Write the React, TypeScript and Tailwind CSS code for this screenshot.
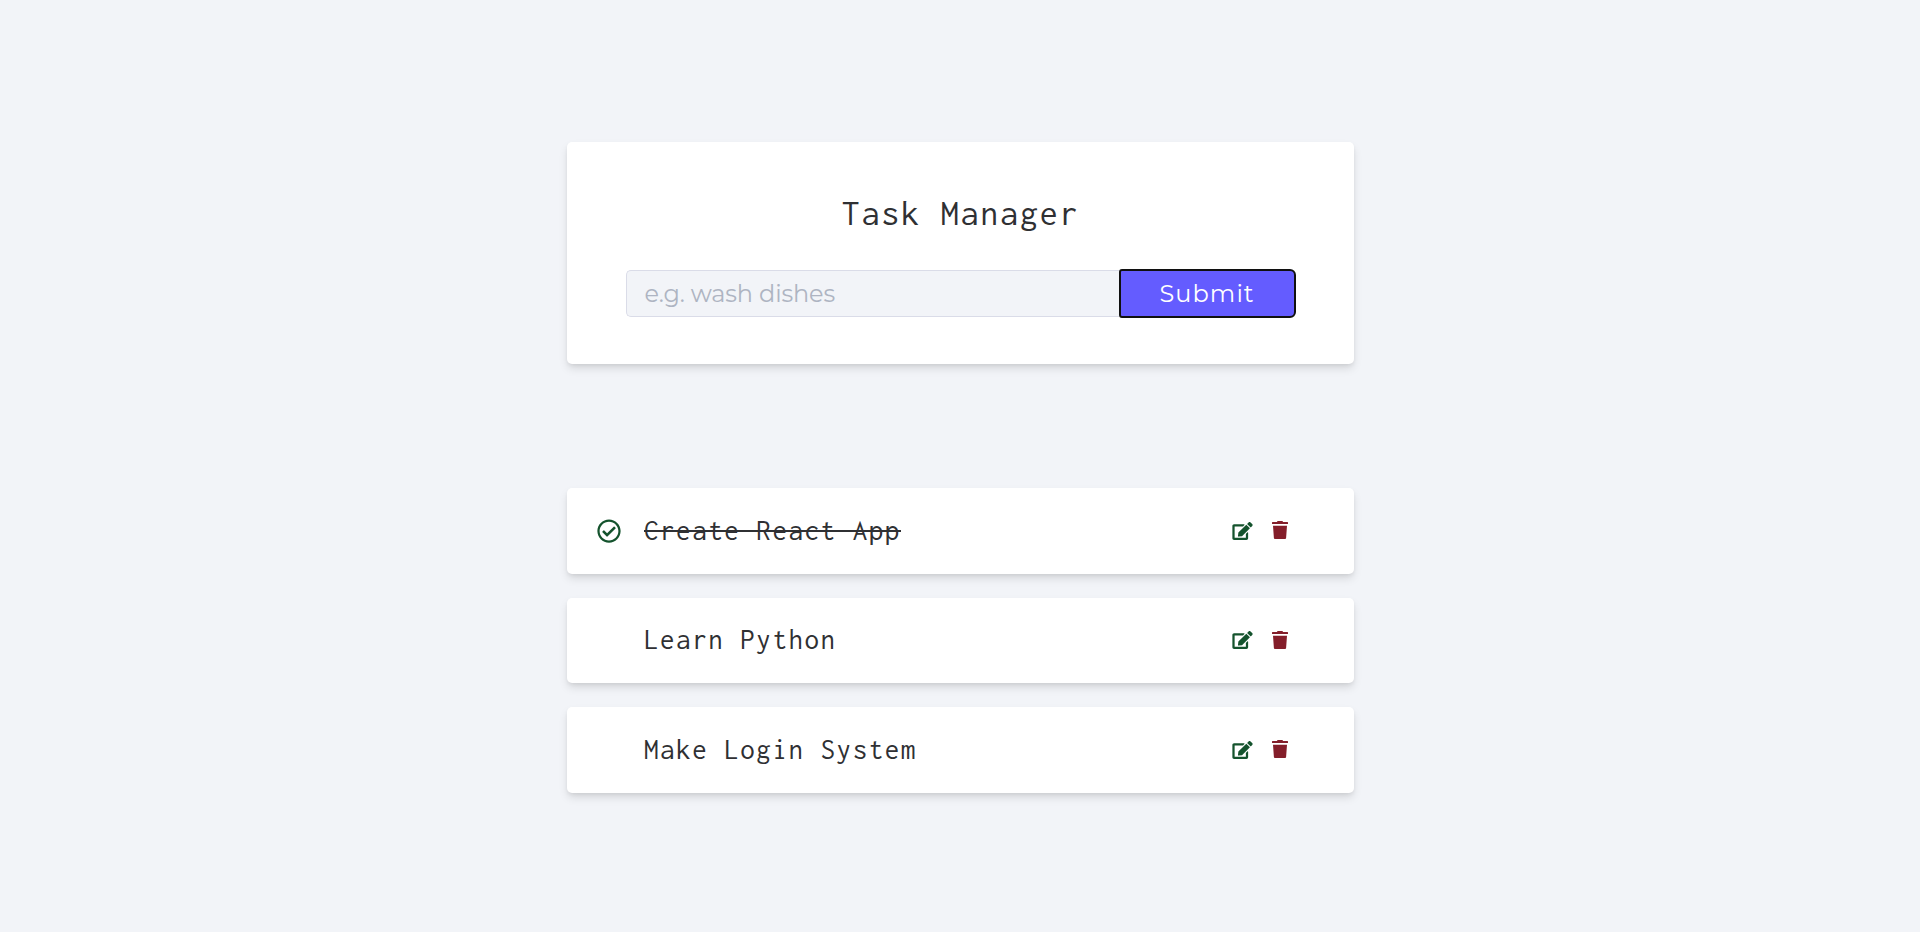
import { FaEdit, FaRegCheckCircle } from "react-icons/fa";

type Task = { id: number; name: string; completed: boolean };

const tasks: Task[] = [
  { id: 1, name: "Create React App", completed: true },
  { id: 2, name: "Learn Python", completed: false },
  { id: 3, name: "Make Login System", completed: false },
];

const shadow = "shadow-[0_5px_10px_-1px_rgba(0,0,0,0.13),0_2px_4px_-1px_rgba(0,0,0,0.07)]";

function TrashIcon() {
  return (
    <svg viewBox="0 0 16 18" fill="currentColor" className="h-[18px] w-[16px]">
      <path d="M5.6 0h4.8l.7 1H15.6q.4 0 .4.4V3H0V1.4Q0 1 .4 1H4.9zM1 4.7H15L14.1 17q-.1 1-1 1H2.9q-.9 0-1-1z" />
    </svg>
  );
}

function TaskForm() {
  return (
    <form className={`flex h-[222px] flex-col items-center rounded-[5px] bg-white pt-[47px] ${shadow}`}>
      <h1 className="h-[48px] font-['Inconsolata','Liberation_Mono',monospace] text-[36px] leading-[48px] tracking-[1.8px] text-[#2f3033]">
        Task Manager
      </h1>
      <div className="mt-[32px] flex w-[670px] items-start">
        <input
          type="text"
          placeholder="e.g. wash dishes"
          className="mt-px h-[47px] w-[493px] rounded-l-[5px] border border-r-0 border-[#dadce8] bg-[#f2f4f8] pl-[18px] font-['Montserrat','Inter',sans-serif] text-[24px] tracking-[-0.15px] text-gray-700 outline-none placeholder:text-[#aeb4c2]"
        />
        <button
          type="button"
          className="h-[49px] w-[177px] rounded-l-[3px] rounded-r-[6px] border-2 border-[#101010] bg-[#645cff] font-['Montserrat','Inter',sans-serif] text-[24px] tracking-[1.1px] text-white"
        >
          Submit
        </button>
      </div>
    </form>
  );
}

function TaskRow({ task }: { task: Task }) {
  return (
    <li className={`flex h-[85.6px] items-center rounded-[5px] bg-white pr-[66px] pl-[29.5px] ${shadow}`}>
      <span className="w-[47.5px] text-[24px] text-[#14532d]">{task.completed && <FaRegCheckCircle />}</span>
      <p className="flex-1 font-['Inconsolata','Liberation_Mono',monospace] text-[29px] leading-[40px] tracking-[1.55px] text-[#2f3033]">
        {task.completed ? (
          <s className="relative inline-block no-underline after:absolute after:top-[19px] after:left-0 after:h-[2px] after:w-full after:bg-[#2f3033]">
            {task.name}
          </s>
        ) : (
          task.name
        )}
      </p>
      <button type="button" aria-label="Edit task" className="text-[#14532d]">
        <FaEdit className="h-[18px] w-[21px]" />
      </button>
      <button type="button" aria-label="Delete task" className="mb-px ml-[19px] text-[#841e2a]">
        <TrashIcon />
      </button>
    </li>
  );
}

export default function App() {
  return (
    <main className="h-[932px] bg-[#f2f4f8] pt-[142px] pl-px">
      <section className="mx-auto w-[787px]">
        <TaskForm />
        <ul className="mt-[124px] flex flex-col gap-[24px]">
          {tasks.map((task) => (
            <TaskRow key={task.id} task={task} />
          ))}
        </ul>
      </section>
    </main>
  );
}
